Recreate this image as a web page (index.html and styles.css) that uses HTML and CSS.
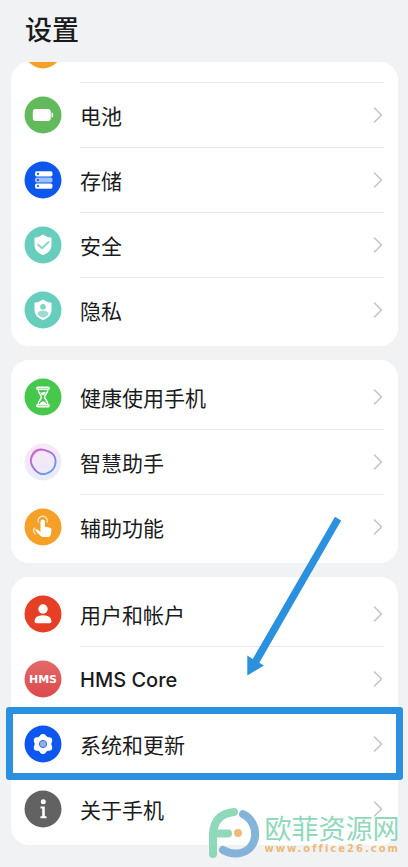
FILE: index.html
```html
<!DOCTYPE html>
<html lang="zh-CN">
<head>
<meta charset="utf-8">
<meta name="viewport" content="width=device-width, initial-scale=1">
<title>设置</title>
<link rel="stylesheet" href="styles.css">
</head>
<body>
<svg class="defs" aria-hidden="true">
  <defs>
    <symbol id="chevron" viewBox="0 0 10 18"><path d="M1.5 2 8.5 9l-7 7" fill="none" stroke="#c4c5c6" stroke-width="1.6" stroke-linecap="round" stroke-linejoin="round"/></symbol>
    <linearGradient id="ring" x1="0" y1="0" x2="1" y2="1"><stop offset="0" stop-color="#dc5cc0"/><stop offset=".5" stop-color="#9b6fe0"/><stop offset="1" stop-color="#4db4e6"/></linearGradient>
    <linearGradient id="halo" x1="0" y1="0" x2="0" y2="1"><stop offset="0" stop-color="#fbe6f4"/><stop offset="1" stop-color="#e7ecfc"/></linearGradient>
    <linearGradient id="hms" x1="0" y1="0" x2="0" y2="1"><stop offset="0" stop-color="#e3696a"/><stop offset="1" stop-color="#dc4a4c"/></linearGradient>
  </defs>
</svg>
<header class="header"><h1 class="title">设置</h1></header>
<main class="groups">
  <nav class="card card-scrolled">
    <div class="row row-hidden" aria-hidden="true">
      <svg class="icon" viewBox="0 0 38 38"><circle cx="19" cy="19" r="18.5" fill="#f5a027"/></svg>
      <span class="body"></span>
    </div>
    <a class="row" href="#battery">
      <svg class="icon" viewBox="0 0 38 38"><circle cx="19" cy="19" r="18.5" fill="#62ba5c"/><rect x="8.8" y="13" width="18" height="12" rx="3" fill="#fff"/><path d="M27.6 16.5q1.500 0 1.500 1.300v2.400q0 1.300-1.500 1.300z" fill="#fff"/></svg>
      <span class="body"><span class="label">电池</span><svg class="chevron"><use href="#chevron"/></svg></span>
    </a>
    <a class="row" href="#storage">
      <svg class="icon" viewBox="0 0 38 38"><circle cx="19" cy="19" r="18.5" fill="#0d57ee"/><rect x="11" y="10.3" width="17.5" height="5.2" rx="1.8" fill="#fff"/><rect x="11" y="16.4" width="17.5" height="5.2" rx="1.8" fill="#9fc0fa"/><rect x="11" y="22.5" width="17.5" height="5.2" rx="1.8" fill="#fff"/><g fill="#0d57ee"><circle cx="14" cy="12.9" r="1.1"/><circle cx="14" cy="19" r="1.1"/><circle cx="14" cy="25.1" r="1.1"/></g></svg>
      <span class="body"><span class="label">存储</span><svg class="chevron"><use href="#chevron"/></svg></span>
    </a>
    <a class="row" href="#security">
      <svg class="icon" viewBox="0 0 38 38"><circle cx="19" cy="19" r="18.5" fill="#67cdbd"/><path d="M19 8.500q4 2.900 8.500 3.300v7.400q0 6.600-8.500 10-8.500-3.400-8.500-10v-7.400q4.500-.4 8.500-3.300z" fill="#fff"/><path d="m14.200 18.700 3.800 3.600 6.500-6.300" fill="none" stroke="#8bd6ca" stroke-width="1.9" stroke-linecap="round" stroke-linejoin="round"/></svg>
      <span class="body"><span class="label">安全</span><svg class="chevron"><use href="#chevron"/></svg></span>
    </a>
    <a class="row" href="#privacy">
      <svg class="icon" viewBox="0 0 38 38"><circle cx="19" cy="19" r="18.5" fill="#67cdbd"/><path d="M19 8.500q4 2.900 8.500 3.300v7.400q0 6.600-8.500 10-8.500-3.400-8.500-10v-7.400q4.500-.4 8.500-3.300z" fill="#fff"/><circle cx="19" cy="15.800" r="2.900" fill="#80d3c5"/><path d="M13.500 23.500q0-4 5.500-4t5.500 4q-2 2.300-5.500 3.300-3.500-1-5.500-3.300z" fill="#9cddd2"/></svg>
      <span class="body"><span class="label">隐私</span><svg class="chevron"><use href="#chevron"/></svg></span>
    </a>
  </nav>
  <nav class="card">
    <a class="row" href="#balance">
      <svg class="icon" viewBox="0 0 38 38"><circle cx="19" cy="19" r="18.5" fill="#45c84b"/><g fill="none" stroke="#fff" stroke-width="1.500" stroke-linecap="round" stroke-linejoin="round"><rect x="12.800" y="9.200" width="12.400" height="2" rx="1"/><rect x="12.800" y="26.800" width="12.400" height="2" rx="1"/><path d="M14.200 11.500c0 4 3.200 5.200 3.200 7.500s-3.200 3.500-3.200 7.500M23.800 11.500c0 4-3.200 5.200-3.200 7.500s3.200 3.500 3.200 7.500"/></g><path d="M16.200 14q1.500.9 2.800.2t2.800-.2q-1 2.200-2.800 3.400-1.800-1.200-2.800-3.400zM15.700 26q.7-2 3.300-2.700 2.600.7 3.300 2.700z" fill="#fff"/></svg>
      <span class="body"><span class="label">健康使用手机</span><svg class="chevron"><use href="#chevron"/></svg></span>
    </a>
    <a class="row" href="#assistant">
      <svg class="icon" viewBox="0 0 38 38"><circle cx="19" cy="19" r="18.5" fill="url(#halo)"/><g fill="none" stroke="url(#ring)"><path d="M13.500 6.800C18 5 21 7.500 25 8.800s6.800 5.200 6.500 10.700-3 8.700-8 10.800-9.500.2-12.700-3.800S5.500 18.500 7.300 14s2.200-5.400 6.200-7.200z" stroke-width="1.600"/><path d="M12.500 8.500c4.500-2.500 7.500-2 12-.3s8 6.300 7.200 11.300-3.700 9-8.700 10.700-9 .3-12.500-3.700-4.200-8.500-2.700-12 1.700-4.300 4.700-6z" stroke-width="1.600" opacity=".7"/></g></svg>
      <span class="body"><span class="label">智慧助手</span><svg class="chevron"><use href="#chevron"/></svg></span>
    </a>
    <a class="row" href="#accessibility">
      <svg class="icon" viewBox="0 0 38 38"><circle cx="19" cy="19" r="18.5" fill="#f5a027"/><path d="M16.500 24V13.800a2.200 2.200 0 0 1 4.400 0v5l4.600.8q2.200.4 2 2.500l-.7 4.300q-.4 2.500-2.800 2.500h-5q-1.600 0-2.800-1.300l-4.500-4.700q-.8-1 .3-1.600 1-.4 2.100.6z" fill="#fff"/><g fill="none" stroke="#fff" stroke-width="1.200" stroke-linecap="round" opacity=".8"><path d="M14.200 14.200a4.700 4.700 0 1 1 9 0"/><path d="M11 20q-2 1-1.300 3.600.5 1.500 1.500 2.300"/></g></svg>
      <span class="body"><span class="label">辅助功能</span><svg class="chevron"><use href="#chevron"/></svg></span>
    </a>
  </nav>
  <nav class="card">
    <a class="row" href="#accounts">
      <svg class="icon" viewBox="0 0 38 38"><circle cx="19" cy="19" r="18.5" fill="#e63f25"/><circle cx="19" cy="14" r="4.700" fill="#fff"/><path d="M10.500 26.500q.3-6.200 8.500-6.200t8.500 6.200q0 1.800-1.800 1.800H12.300q-1.800 0-1.800-1.800z" fill="#fff"/></svg>
      <span class="body"><span class="label">用户和帐户</span><svg class="chevron"><use href="#chevron"/></svg></span>
    </a>
    <a class="row" href="#hms">
      <svg class="icon" viewBox="0 0 38 38"><circle cx="19" cy="19" r="18.5" fill="url(#hms)"/><text class="hms" x="19" y="23" text-anchor="middle">HMS</text></svg>
      <span class="body"><span class="label label-latin">HMS Core</span><svg class="chevron"><use href="#chevron"/></svg></span>
    </a>
    <a class="row row-marked" href="#system">
      <svg class="icon" viewBox="0 0 38 38"><circle cx="19" cy="19" r="18.5" fill="#0d57ee"/><g fill="#fff"><circle cx="19" cy="19" r="8.400"/><circle cx="19" cy="12.200" r="3.200"/><circle cx="25" cy="15.500" r="3.200"/><circle cx="25" cy="22.500" r="3.200"/><circle cx="19" cy="25.800" r="3.200"/><circle cx="13" cy="22.500" r="3.200"/><circle cx="13" cy="15.500" r="3.200"/></g><circle cx="19" cy="19" r="3.600" fill="#8fb4f5" stroke="#3f6fc8" stroke-width="1"/></svg>
      <span class="body"><span class="label">系统和更新</span><svg class="chevron"><use href="#chevron"/></svg></span>
    </a>
    <a class="row" href="#about">
      <svg class="icon" viewBox="0 0 38 38"><circle cx="19" cy="19" r="18.5" fill="#626262"/><circle cx="19.300" cy="11.800" r="2.500" fill="#fff"/><path d="M16.500 16.500h4.300v9.700h1.700v2h-6v-2h1.700v-7.700h-1.700z" fill="#fff"/></svg>
      <span class="body"><span class="label">关于手机</span><svg class="chevron"><use href="#chevron"/></svg></span>
    </a>
    <svg class="arrow" viewBox="0 0 96 162" aria-hidden="true"><path d="M89 .7 95.200 4.400 13.300 146.700 17.900 149.600 1.300 159.500V139.600L6.700 143z" fill="#2b91de"/></svg>
  </nav>
</main>
<aside class="watermark">
  <svg class="mark" viewBox="0 0 52 52" aria-hidden="true"><g fill="none" stroke-width="8" stroke-linecap="round"><path d="M5 47V27Q6 7 26 5M8 26.500H20" stroke="#87d5b5"/><path d="M35 7.200C53 16 51 45 29 46.500Q22 47 15 43" stroke="#7aaed6"/></g><circle cx="30" cy="26" r="4" fill="#edb56e"/></svg>
  <div class="brand"><span class="brand-name">欧菲资源网</span><span class="brand-url">www.office26.com</span></div>
</aside>
</body>
</html>
```
FILE: styles.css
```css
* {
  box-sizing: border-box;
}

body {
  position: relative;
  min-height: 100vh;
  margin: 0;
  background: #f1f2f4;
  color: #1a1b1c;
  font-family: "Noto Sans CJK SC", sans-serif;
}

.defs {
  position: absolute;
  width: 0;
  height: 0;
}

.header {
  display: flex;
  align-items: center;
  height: 62px;
  padding: 0 25px 4px;
}

.title {
  margin: 0;
  font-size: 27px;
  line-height: 40px;
  font-weight: 500;
}

.groups {
  display: flex;
  flex-direction: column;
  gap: 14px;
  padding: 0 10px 22px 11px;
}

.card {
  position: relative;
  padding: 5px 0 4px;
  border-radius: 18px;
  background: #fff;
}

.card-scrolled {
  padding-top: 0;
  overflow: hidden;
}

.row {
  position: relative;
  display: flex;
  align-items: stretch;
  gap: 18px;
  height: 65px;
  padding: 0 14px 0 13px;
  color: inherit;
  text-decoration: none;
}

a.row:last-of-type {
  height: 64px;
}

.row-hidden {
  margin-top: -44px;
}

.icon {
  flex: none;
  width: 38px;
  height: 38px;
  margin-top: 13px;
}

.body {
  flex: 1;
  display: flex;
  align-items: center;
  justify-content: space-between;
  border-bottom: 1px solid #e6e7e8;
}

a.row:last-of-type .body {
  border-bottom: 0;
}

.label {
  font-size: 21px;
  line-height: 32px;
}

.label-latin {
  padding-top: 2px;
  font-family: Inter, sans-serif;
  font-size: 20px;
  font-weight: 500;
}

.chevron {
  width: 10px;
  height: 18px;
  margin-right: 1px;
}

.hms {
  fill: #fff;
  font: 700 11px "DejaVu Sans", sans-serif;
}

.row-marked::after {
  content: "";
  position: absolute;
  inset: -5px -5px -3px;
  border: 7px solid #2b91de;
  border-radius: 3px;
  pointer-events: none;
}

.arrow {
  position: absolute;
  right: 56px;
  top: -61px;
  width: 96px;
  height: 162px;
  pointer-events: none;
}

.watermark {
  position: absolute;
  right: 8px;
  bottom: 8px;
  display: flex;
  align-items: center;
  gap: 4px;
  opacity: 0.92;
}

.mark {
  width: 52px;
  height: 52px;
}

.brand {
  display: flex;
  flex-direction: column;
}

.brand-name {
  color: #87d5b5;
  font-size: 27px;
  line-height: 32px;
}

.brand-url {
  color: #edb56e;
  font: 600 10px/10px "DejaVu Sans", sans-serif;
  letter-spacing: 2px;
}
```
